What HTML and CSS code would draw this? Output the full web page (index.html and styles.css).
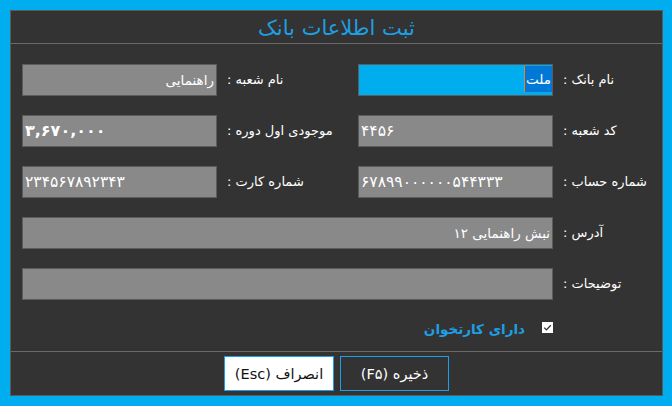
FILE: index.html
```html
<!DOCTYPE html>
<html lang="fa">
<head>
<meta charset="utf-8">
<title>ثبت اطلاعات بانک</title>
<link rel="stylesheet" href="styles.css">
</head>
<body>
<div class="panel">
  <div class="header">ثبت اطلاعات بانک</div>
  <div class="form">
    <div class="label">نام بانک :</div>
    <div class="field field-active"><span class="sel">ملت</span></div>
    <div class="label">نام شعبه :</div>
    <div class="field">راهنمایی</div>

    <div class="label">کد شعبه :</div>
    <div class="field num">۴۴۵۶</div>
    <div class="label">موجودی اول دوره :</div>
    <div class="field num bold">۳,۶۷۰,۰۰۰</div>

    <div class="label">شماره حساب :</div>
    <div class="field num">۶۷۸۹۹۰۰۰۰۰۰۵۴۴۳۳۳</div>
    <div class="label">شماره کارت :</div>
    <div class="field num">۲۳۴۵۶۷۸۹۲۳۴۳</div>

    <div class="label">آدرس :</div>
    <div class="field wide">نبش راهنمایی ۱۲</div>

    <div class="label">توضیحات :</div>
    <div class="field wide"></div>

    <div class="check-row">
      <span class="checkbox"><svg width="11" height="11" viewBox="0 0 11 11"><polyline points="2.2,5.6 4.4,7.9 8.8,3.2" fill="none" stroke="#333" stroke-width="1.3"/></svg></span>
      <span class="check-label">دارای کارتخوان</span>
    </div>
  </div>
  <div class="footer">
    <button class="btn btn-save">ذخیره (F۵)</button>
    <button class="btn btn-cancel">انصراف (Esc)</button>
  </div>
</div>
</body>
</html>
```

FILE: styles.css
```css
* { box-sizing: border-box; }
html, body { margin: 0; padding: 0; }
body {
  background: #00aeef;
  width: 672px;
  height: 406px;
  padding: 10px 0 0 10px;
  font-family: "DejaVu Sans", sans-serif;
  overflow: hidden;
}
.panel {
  width: 653px;
  height: 386px;
  background: #333333;
  border: 1px solid #5a5a5a;
  display: flex;
  flex-direction: column;
}
.header {
  height: 33px;
  border-bottom: 1px solid #6a6a6a;
  color: #1e9fe3;
  font-size: 21px;
  text-align: center;
  line-height: 34px;
  direction: rtl;
}
.form {
  direction: rtl;
  display: grid;
  grid-template-columns: 90px 195px 121px 195px;
  grid-auto-rows: 32px;
  column-gap: 10px;
  row-gap: 19px;
  padding: 20px 9px 0 11px;
}
.label {
  color: #ffffff;
  font-size: 13px;
  line-height: 32px;
  text-align: left;
  white-space: nowrap;
}
.field {
  background: #898989;
  border: 1px solid #5c5c5c;
  color: #ffffff;
  font-size: 13.5px;
  line-height: 30px;
  padding: 0 2px;
  text-align: right;
  white-space: nowrap;
  overflow: hidden;
}
.field.num {
  direction: ltr;
  text-align: left;
  font-size: 15.5px;
}
.field.bold { font-weight: bold; font-size: 16px; }
.field.wide { grid-column: 2 / 5; }
.field-active {
  background: #00aeef;
  padding: 1px 0 0 0;
  line-height: 26px;
}
.sel {
  display: inline-block;
  height: 26px;
  background: #0078d7;
  color: #ffffff;
  padding: 0 1px 0 1px;
  border-left: 1px solid #ff7a1a;
  font-size: 13.5px;
}
.check-row {
  grid-column: 2 / 5;
  height: 14px;
  display: flex;
  align-items: center;
  gap: 17px;
  margin-top: 1px;
}
.checkbox {
  width: 11px;
  height: 11px;
  background: #ffffff;
  display: block;
  flex: none;
}
.checkbox svg { display: block; }
.check-label {
  color: #1e9fe3;
  font-size: 13.5px;
  font-weight: bold;
  line-height: 14px;
  position: relative;
  top: 2px;
}
.footer {
  margin-top: auto;
  border-top: 1px solid #6a6a6a;
  height: 44px;
  padding-top: 4px;
  display: flex;
  direction: rtl;
  justify-content: center;
  gap: 6px;
}
.btn {
  height: 35px;
  font-family: "DejaVu Sans", sans-serif;
  font-size: 14.5px;
  border: 1px solid #1e9fe3;
  padding: 0;
  direction: rtl;
}
.btn-save {
  width: 109px;
  background: #333333;
  color: #ffffff;
}
.btn-cancel {
  width: 110px;
  background: #ffffff;
  color: #111111;
}
```
